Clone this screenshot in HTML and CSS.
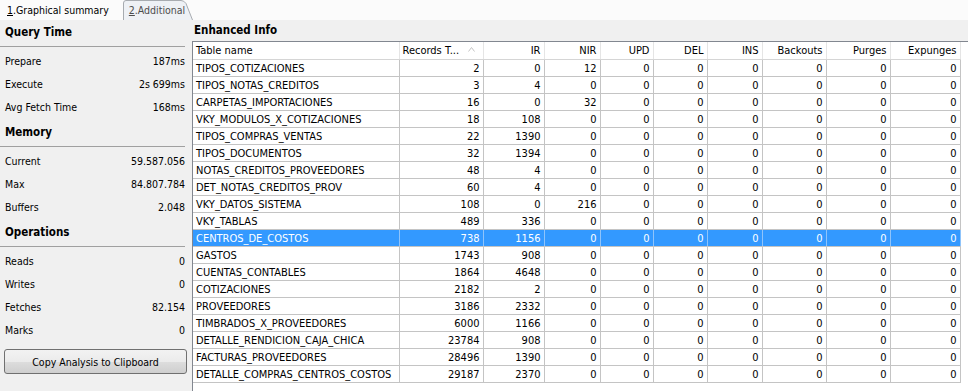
FILE: index.html
```html
<!DOCTYPE html>
<html lang="en">
<head>
    <meta charset="UTF-8">
    <title>Analysis</title>
    <link rel="stylesheet" href="styles.css">
</head>
<body>
    <div class="tabs">
        <span class="tab"><u>1</u>.Graphical summary</span>
        <span class="tab tab-active">
            <svg class="tab-shape" width="70" height="20" viewBox="0 0 70 20">
                <path d="M0.5 20 V3 Q0.5 0.5 3 0.5 H58 Q61 0.5 63 3.5 L69.5 20" fill="#eef1f5" stroke="#a7abb0"/>
            </svg>
            <span class="tab-label"><u>2</u>.Additional</span>
        </span>
    </div>
    <div class="main">
        <div class="side">
            <div class="section">
                <div class="section-title">Query Time</div>
                <div class="stat"><span>Prepare</span><span>187ms</span></div>
                <div class="stat"><span>Execute</span><span>2s 699ms</span></div>
                <div class="stat"><span>Avg Fetch Time</span><span>168ms</span></div>
            </div>
            <div class="section">
                <div class="section-title">Memory</div>
                <div class="stat"><span>Current</span><span>59.587.056</span></div>
                <div class="stat"><span>Max</span><span>84.807.784</span></div>
                <div class="stat"><span>Buffers</span><span>2.048</span></div>
            </div>
            <div class="section">
                <div class="section-title">Operations</div>
                <div class="stat"><span>Reads</span><span>0</span></div>
                <div class="stat"><span>Writes</span><span>0</span></div>
                <div class="stat"><span>Fetches</span><span>82.154</span></div>
                <div class="stat"><span>Marks</span><span>0</span></div>
            </div>
            <button class="copy-btn">Copy Analysis to Clipboard</button>
        </div>
        <div class="content">
            <div class="content-title">Enhanced Info</div>
            <div class="grid-wrap">
                <table class="grid">
                    <colgroup>
                        <col style="width:206px">
                        <col style="width:84px">
                        <col style="width:61px">
                        <col style="width:56px">
                        <col style="width:53px">
                        <col style="width:54px">
                        <col style="width:55px">
                        <col style="width:64px">
                        <col style="width:64px">
                        <col style="width:70px">
                    </colgroup>
                    <thead>
                        <tr>
                            <th class="name">Table name</th>
                            <th class="name sorted">Records T...
                                <svg class="sort" width="7" height="5" viewBox="0 0 7 5"><path d="M0.5 4.5 L3.5 0.5 L6.5 4.5" fill="none" stroke="#c4c4c4"/></svg>
                            </th>
                            <th>IR</th>
                            <th>NIR</th>
                            <th>UPD</th>
                            <th>DEL</th>
                            <th>INS</th>
                            <th>Backouts</th>
                            <th>Purges</th>
                            <th>Expunges</th>
                        </tr>
                    </thead>
                    <tbody>
                        <tr><td class="name">TIPOS_COTIZACIONES</td><td>2</td><td>0</td><td>12</td><td>0</td><td>0</td><td>0</td><td>0</td><td>0</td><td>0</td></tr>
                        <tr><td class="name">TIPOS_NOTAS_CREDITOS</td><td>3</td><td>4</td><td>0</td><td>0</td><td>0</td><td>0</td><td>0</td><td>0</td><td>0</td></tr>
                        <tr><td class="name">CARPETAS_IMPORTACIONES</td><td>16</td><td>0</td><td>32</td><td>0</td><td>0</td><td>0</td><td>0</td><td>0</td><td>0</td></tr>
                        <tr><td class="name">VKY_MODULOS_X_COTIZACIONES</td><td>18</td><td>108</td><td>0</td><td>0</td><td>0</td><td>0</td><td>0</td><td>0</td><td>0</td></tr>
                        <tr><td class="name">TIPOS_COMPRAS_VENTAS</td><td>22</td><td>1390</td><td>0</td><td>0</td><td>0</td><td>0</td><td>0</td><td>0</td><td>0</td></tr>
                        <tr><td class="name">TIPOS_DOCUMENTOS</td><td>32</td><td>1394</td><td>0</td><td>0</td><td>0</td><td>0</td><td>0</td><td>0</td><td>0</td></tr>
                        <tr><td class="name">NOTAS_CREDITOS_PROVEEDORES</td><td>48</td><td>4</td><td>0</td><td>0</td><td>0</td><td>0</td><td>0</td><td>0</td><td>0</td></tr>
                        <tr><td class="name">DET_NOTAS_CREDITOS_PROV</td><td>60</td><td>4</td><td>0</td><td>0</td><td>0</td><td>0</td><td>0</td><td>0</td><td>0</td></tr>
                        <tr><td class="name">VKY_DATOS_SISTEMA</td><td>108</td><td>0</td><td>216</td><td>0</td><td>0</td><td>0</td><td>0</td><td>0</td><td>0</td></tr>
                        <tr><td class="name">VKY_TABLAS</td><td>489</td><td>336</td><td>0</td><td>0</td><td>0</td><td>0</td><td>0</td><td>0</td><td>0</td></tr>
                        <tr class="selected"><td class="name">CENTROS_DE_COSTOS</td><td>738</td><td>1156</td><td>0</td><td>0</td><td>0</td><td>0</td><td>0</td><td>0</td><td>0</td></tr>
                        <tr><td class="name">GASTOS</td><td>1743</td><td>908</td><td>0</td><td>0</td><td>0</td><td>0</td><td>0</td><td>0</td><td>0</td></tr>
                        <tr><td class="name">CUENTAS_CONTABLES</td><td>1864</td><td>4648</td><td>0</td><td>0</td><td>0</td><td>0</td><td>0</td><td>0</td><td>0</td></tr>
                        <tr><td class="name">COTIZACIONES</td><td>2182</td><td>2</td><td>0</td><td>0</td><td>0</td><td>0</td><td>0</td><td>0</td><td>0</td></tr>
                        <tr><td class="name">PROVEEDORES</td><td>3186</td><td>2332</td><td>0</td><td>0</td><td>0</td><td>0</td><td>0</td><td>0</td><td>0</td></tr>
                        <tr><td class="name">TIMBRADOS_X_PROVEEDORES</td><td>6000</td><td>1166</td><td>0</td><td>0</td><td>0</td><td>0</td><td>0</td><td>0</td><td>0</td></tr>
                        <tr><td class="name">DETALLE_RENDICION_CAJA_CHICA</td><td>23784</td><td>908</td><td>0</td><td>0</td><td>0</td><td>0</td><td>0</td><td>0</td><td>0</td></tr>
                        <tr><td class="name">FACTURAS_PROVEEDORES</td><td>28496</td><td>1390</td><td>0</td><td>0</td><td>0</td><td>0</td><td>0</td><td>0</td><td>0</td></tr>
                        <tr><td class="name">DETALLE_COMPRAS_CENTROS_COSTOS</td><td>29187</td><td>2370</td><td>0</td><td>0</td><td>0</td><td>0</td><td>0</td><td>0</td><td>0</td></tr>
                    </tbody>
                </table>
            </div>
        </div>
    </div>
</body>
</html>
```

FILE: styles.css
```css
html, body {
    height: 100%;
}
body {
    margin: 0;
    font-family: "DejaVu Sans Condensed", "DejaVu Sans", sans-serif;
    font-size: 11px;
    color: #000;
    background-color: #f0f0f0;
    display: flex;
    flex-direction: column;
    overflow: hidden;
}
u {
    text-decoration: underline;
}
.tabs {
    height: 20px;
    background-color: #fbfbfb;
    display: flex;
    align-items: flex-end;
    flex-shrink: 0;
    font-size: 10.5px;
}
.tab {
    height: 19px;
    line-height: 19px;
    padding: 0 0 0 7px;
    color: #000;
}
.tab-active {
    position: relative;
    margin-left: 14px;
    width: 70px;
    padding-left: 0;
    color: #4d4d4d;
}
.tab-shape {
    position: absolute;
    left: 0;
    top: -1px;
}
.tab-label {
    position: relative;
    padding-left: 6px;
}
.main {
    flex: 1;
    display: flex;
    min-height: 0;
}
.side {
    width: 192px;
    flex-shrink: 0;
    display: flex;
    flex-direction: column;
}
.section + .section {
    margin-top: 2px;
}
.section-title {
    height: 26px;
    line-height: 25px;
    padding-left: 5px;
    font-weight: bold;
    font-size: 11.5px;
    border-bottom: 1px solid #a0a0a0;
    margin-right: 7px;
    margin-bottom: 2px;
}
.stat {
    height: 23px;
    display: flex;
    justify-content: space-between;
    align-items: center;
    padding: 0 7px 0 5px;
    font-size: 10.5px;
}
.copy-btn {
    margin: 8px 5px 0 4px;
    height: 25px;
    font-family: inherit;
    font-size: 10.5px;
    color: #000;
    background: linear-gradient(#f2f2f2 0%, #ebebeb 50%, #dddddd 51%, #cfcfcf 100%);
    border: 1px solid #707070;
    border-radius: 3px;
    padding: 0;
}
.content {
    flex: 1;
    display: flex;
    flex-direction: column;
    min-width: 0;
}
.content-title {
    height: 21px;
    line-height: 20px;
    padding-left: 2px;
    font-weight: bold;
    font-size: 11.5px;
}
.grid-wrap {
    flex: 1;
    background-color: #fff;
    border-left: 1px solid #828790;
    border-top: 1px solid #828790;
}
.grid {
    border-collapse: collapse;
    table-layout: fixed;
    width: 767px;
}
.grid th {
    height: 17px;
    padding: 0 3px 0 3px;
    font-weight: normal;
    text-align: right;
    white-space: nowrap;
    background-color: #fff;
    border-bottom: 1px solid #d5d5d5;
    border-right: 1px solid #e5e5e5;
}
.grid th.name {
    text-align: left;
}
.grid th.sorted {
    position: relative;
}
.sort {
    position: absolute;
    right: 8px;
    top: 5px;
}
.grid td {
    height: 16px;
    padding: 0 3px 0 3px;
    text-align: right;
    white-space: nowrap;
    overflow: hidden;
    border-right: 1px solid #c4c4c4;
    border-bottom: 1px solid #c4c4c4;
}
.grid td.name {
    text-align: left;
    padding-left: 3px;
}
.grid tr.selected td {
    background-color: #3399ff;
    color: #fff;
    border-right-color: #8fc4fb;
}
```
